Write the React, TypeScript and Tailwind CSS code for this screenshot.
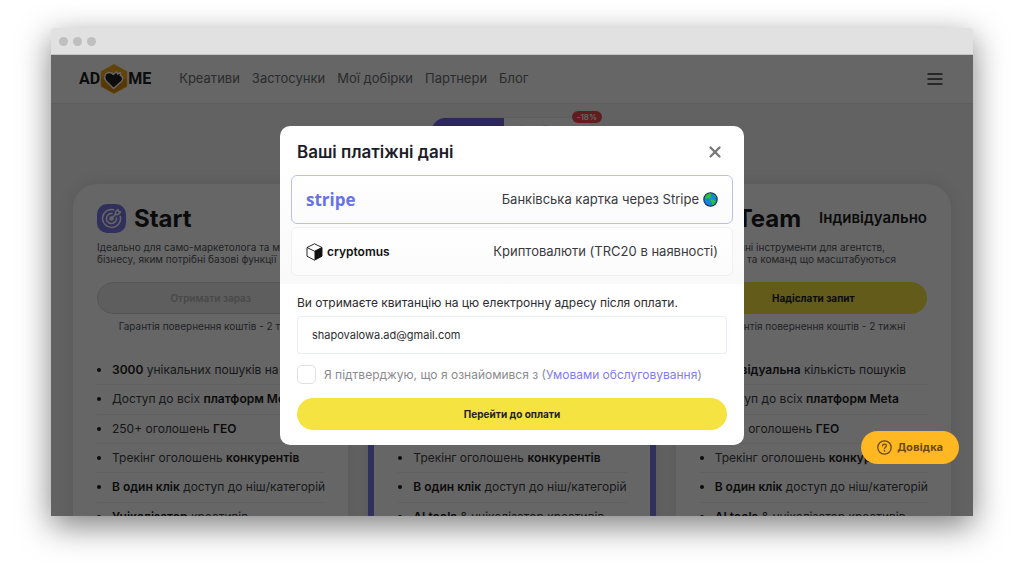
import React, { useState } from "react";
import { X } from "lucide-react";

type Feature = { bold?: string; before?: string; after?: string };

type Plan = {
  name: string;
  price?: string;
  description: string[];
  cta: string;
  disabled?: boolean;
  highlighted?: boolean;
  features: Feature[];
};

const navLinks = ["Креативи", "Застосунки", "Мої добірки", "Партнери", "Блог"];

const plans: Plan[] = [
  {
    name: "Start",
    description: ["Ідеально для само-маркетолога та малого", "бізнесу, яким потрібні базові функції"],
    cta: "Отримати зараз",
    disabled: true,
    features: [
      { bold: "3000", after: " унікальних пошуків на місяць" },
      { before: "Доступ до всіх ", bold: "платформ Meta" },
      { before: "250+ оголошень ", bold: "ГЕО" },
      { before: "Трекінг оголошень ", bold: "конкурентів" },
      { bold: "В один клік", after: " доступ до ніш/категорій" },
      { bold: "Унікалізатор", after: " креативів" },
    ],
  },
  {
    name: "Pro",
    description: ["Ідеально для досвідчених маркетологів", "та невеликих команд"],
    cta: "Отримати зараз",
    highlighted: true,
    features: [
      { bold: "9000", after: " унікальних пошуків" },
      { before: "Доступ до всіх ", bold: "платформ Meta" },
      { before: "250+ оголошень ", bold: "ГЕО" },
      { before: "Трекінг оголошень ", bold: "конкурентів" },
      { bold: "В один клік", after: " доступ до ніш/категорій" },
      { bold: "AI tools", after: " & унікалізатор креативів" },
    ],
  },
  {
    name: "Team",
    price: "Індивідуально",
    description: ["Повноцінні інструменти для агентств,", "компаній та команд що масштабуються"],
    cta: "Надіслати запит",
    features: [
      { bold: "Індивідуальна", after: " кількість пошуків" },
      { before: "Доступ до всіх ", bold: "платформ Meta" },
      { before: "250+ оголошень ", bold: "ГЕО" },
      { before: "Трекінг оголошень ", bold: "конкурентів" },
      { bold: "В один клік", after: " доступ до ніш/категорій" },
      { bold: "AI tools", after: " & унікалізатор креативів" },
    ],
  },
];

const Logo = () => (
  <a
    href="#"
    aria-label="AdHeart Me"
    className="flex items-center font-['Roboto',sans-serif] text-base leading-none font-bold text-[#222]"
  >
    AD
    <svg width="28" height="30" viewBox="0 0 28 30">
      <path d="M14 1 L26.500 8 V22 L14 29 L1.500 22 V8 Z" fill="#f5a81c" stroke="#f5a81c" strokeWidth="1.500" strokeLinejoin="round" />
      <path d="M1.500 15 H26.500 V22 L14 29 L1.500 22 Z" fill="#d98a0c" />
      <path
        d="M13.500 24.500 L5.800 16.700 C3.600 14 4.600 9.800 8 8.700 C10 8.200 12 8.900 13.300 10.500 L16.600 7.800 L17.500 10 L20.500 8.500 L20.300 11.200 C23 12.800 23.400 15.500 21.400 17.500 Z"
        fill="#222"
        stroke="#fff"
        strokeWidth="1.400"
        strokeLinejoin="round"
      />
    </svg>
    ME
  </a>
);

const TargetIcon = () => (
  <span className="flex size-[29px] items-center justify-center rounded-[10px] bg-[#7b79e8]">
    <svg width="21" height="21" viewBox="0 0 21 21" fill="none" stroke="#fff" strokeWidth="1.500" strokeLinecap="round" strokeLinejoin="round">
      <path d="M12.500 1.700 A9 9 0 1 0 19.300 8.500" />
      <path d="M11 5.600 A5 5 0 1 0 15.400 10" />
      <path d="M10.500 10.500 L14.500 6.500 M14.500 6.500 V3.800 L17 1.500 L17.500 3.500 L19.500 4 L17.200 6.500 Z" />
      <circle cx="10.500" cy="10.500" r="1.500" />
    </svg>
  </span>
);

const GlobeIcon = () => (
  <svg width="15" height="15" viewBox="0 0 15 15">
    <circle cx="7.500" cy="7.500" r="6.700" fill="#1484e0" stroke="#17324d" strokeWidth="1.100" />
    <path d="M2 5 L3.500 2.700 L6.500 1.300 L8.500 2 L7.500 3.700 L8.600 5 L6.500 6.800 L4.600 6.300 L3 7 Z" fill="#2fc331" />
    <path d="M7.600 7.600 L10.500 7.500 L12.600 9.300 L11.200 12 L9.700 13.400 L9 10.800 L7.400 9.300 Z" fill="#2fc331" />
    <path d="M11 2.500 L13 4.800 L11.500 5 Z" fill="#2fc331" />
  </svg>
);

const CubeIcon = () => (
  <svg width="17" height="18" viewBox="0 0 17 18" strokeLinejoin="round">
    <path d="M8.500 0.800 L16 4.500 V13.200 L8.500 17.200 L1 13.200 V4.500 Z" fill="#fff" stroke="#111" strokeWidth="0.900" />
    <path d="M1 4.500 L8.500 8.200 L16 4.500" fill="none" stroke="#111" strokeWidth="0.900" />
    <path d="M8.500 8.200 L16 4.500 V13.200 L8.500 17.200 Z" fill="#111" />
  </svg>
);

const PlanCard = ({ plan }: { plan: Plan }) => (
  <section
    className={
      plan.highlighted
        ? "-mx-[6px] rounded-[30px] border-x-[6px] border-[#7b79e8] bg-white px-6 pt-5 pb-12 shadow-[0_0_16px_rgba(0,0,0,0.1)]"
        : "rounded-[24px] bg-white px-6 pt-5 pb-12 shadow-[0_0_16px_rgba(0,0,0,0.1)]"
    }
  >
    <div className="flex h-[29px] items-center gap-2">
      <TargetIcon />
      <h2 className="text-2xl leading-7 font-bold text-[#1c1d21]">{plan.name}</h2>
      {plan.price && <span className="ml-auto text-[15px] font-semibold text-[#1c1d21]">{plan.price}</span>}
    </div>
    <p className="mt-2 text-[10px] leading-3 whitespace-nowrap text-[#55575d]">
      {plan.description[0]}
      <br />
      {plan.description[1]}
    </p>
    <button
      disabled={plan.disabled}
      className={
        plan.disabled
          ? "mt-[17px] h-8 w-full rounded-full border border-[#d5d5d5] bg-[#ececec] text-[10px] font-semibold text-[#b5b5b5]"
          : "mt-[17px] h-8 w-full rounded-full bg-[#f5e342] text-[10px] font-bold text-[#1c1d21]"
      }
    >
      {plan.cta}
    </button>
    <p className="mt-[6px] text-center text-[10px] leading-3 whitespace-nowrap text-[#55575d]">
      Гарантія повернення коштів - 2 тижні
    </p>
    <ul className="mt-6 grid h-44 grid-rows-6 text-xs text-[#3c3d42]">
      {plan.features.map((feature, index) => (
        <li key={index} className="flex items-center gap-[11px] border-b border-[#f0f0f0] whitespace-nowrap">
          <span className="size-1 rounded-full bg-[#1c1d21]" />
          <span>
            {feature.before}
            <b className="font-semibold text-[#1c1d21]">{feature.bold}</b>
            {feature.after}
          </span>
        </li>
      ))}
    </ul>
  </section>
);

const PaymentModal = () => {
  const [method, setMethod] = useState("stripe");
  const [email, setEmail] = useState("shapovalowa.ad@gmail.com");
  const [agreed, setAgreed] = useState(false);

  const optionBase =
    "flex h-[49px] cursor-pointer items-center justify-between rounded-md border bg-linear-to-b from-white to-[#fbfbfc] px-[14px] text-[13px] text-[#3a3a3d]";

  return (
    <div role="dialog" aria-labelledby="modal-title" className="w-full max-w-[464px] rounded-[10px] bg-white pb-[15px]">
      <div className="flex items-center justify-between pt-[14px] pr-5 pl-[17px]">
        <h1 id="modal-title" className="text-[17px] leading-6 font-semibold text-[#1c1d28]">
          Ваші платіжні дані
        </h1>
        <button aria-label="Закрити" className="text-[#77777a]">
          <X size={18} strokeWidth={3} />
        </button>
      </div>

      <div className="flex flex-col gap-[3px] bg-linear-to-b from-white to-[#f9f9fa] px-[11px] pt-[11px] pb-2">
        <label className={method === "stripe" ? `${optionBase} border-[#bdbdf5]` : `${optionBase} border-[#f0f0f2]`}>
          <input type="radio" name="method" className="sr-only" checked={method === "stripe"} onChange={() => setMethod("stripe")} />
          <span className="font-['Open_Sans',sans-serif] text-[17px] leading-6 font-bold text-[#6772e5]">stripe</span>
          <span className="flex items-center gap-1">
            Банківська картка через Stripe <GlobeIcon />
          </span>
        </label>
        <label className={method === "cryptomus" ? `${optionBase} border-[#bdbdf5]` : `${optionBase} border-[#f0f0f2]`}>
          <input type="radio" name="method" className="sr-only" checked={method === "cryptomus"} onChange={() => setMethod("cryptomus")} />
          <span className="flex items-center gap-1 text-xs font-semibold text-[#111]">
            <CubeIcon /> cryptomus
          </span>
          <span>Криптовалюти (TRC20 в наявності)</span>
        </label>
      </div>

      <form className="px-[17px] pt-[11px]" onSubmit={(e) => e.preventDefault()}>
        <label htmlFor="email" className="block text-xs leading-4 text-[#2c2c30]">
          Ви отримаєте квитанцію на цю електронну адресу після оплати.
        </label>
        <input
          id="email"
          type="email"
          value={email}
          onChange={(e) => setEmail(e.target.value)}
          className="mt-[5px] block h-[38px] w-full rounded-[3px] border border-[#e8eef6] px-[14px] text-[11px] text-[#2c2c30] outline-none"
        />
        <div className="mt-[11px] flex items-center gap-2 text-xs text-[#8b8b8e]">
          <input
            id="terms"
            type="checkbox"
            checked={agreed}
            onChange={(e) => setAgreed(e.target.checked)}
            className="size-[19px] appearance-none rounded-[5px] border border-[#dfdfe1] checked:bg-[#7b79e8]"
          />
          <label htmlFor="terms">
            Я підтверджую, що я ознайомився з (
            <a href="#terms" className="text-[#7f7cf0]">
              Умовами обслуговування
            </a>
            )
          </label>
        </div>
        <button type="submit" className="mt-[14px] block h-8 w-full rounded-full bg-[#f5e342] text-[10px] font-bold text-[#222]">
          Перейти до оплати
        </button>
      </form>
    </div>
  );
};

const App = () => {
  return (
    <div className="flex h-screen flex-col bg-white px-[51px] pt-7 pb-18 font-['Inter',sans-serif]">
      <div className="flex min-h-0 flex-1 flex-col rounded-t-[3px] shadow-[0_10px_32px_rgba(0,0,0,0.5)]">
        {/* Browser bar */}
        <div className="flex h-[27px] shrink-0 items-center gap-[5px] rounded-t-[3px] border-b border-[#c4c4c4] bg-[#e1e1e1] px-2">
          <span className="size-[9px] rounded-full bg-[#bfbfbf]" />
          <span className="size-[9px] rounded-full bg-[#bfbfbf]" />
          <span className="size-[9px] rounded-full bg-[#bfbfbf]" />
        </div>

        <div className="relative min-h-0 flex-1 overflow-hidden bg-[#f4f4f7]">
          {/* Header */}
          <header className="flex h-[49px] items-center border-b border-[#ececec] bg-white px-7">
            <Logo />
            <nav className="ml-7 flex gap-3 text-[13px] text-[#6a6c72]">
              {navLinks.map((link) => (
                <a key={link} href="#">
                  {link}
                </a>
              ))}
            </nav>
            <button aria-label="Меню" className="ml-auto pr-[2px]">
              <svg width="16" height="12" viewBox="0 0 16 12" stroke="#333" strokeWidth="1.400" strokeLinecap="round">
                <path d="M1 1 H15 M1 6 H15 M1 11 H15" />
              </svg>
            </button>
          </header>

          {/* Billing period */}
          <div className="mt-[13px] flex justify-center">
            <div className="relative flex h-7 rounded-full border border-[#ececf0] bg-white text-[11px] leading-6">
              <button className="w-[72px] rounded-l-full bg-[#6e68e0] font-semibold text-white">Щомісяця</button>
              <button className="w-[88px] pl-[9px] text-left text-[#55575d]">Річний</button>
              <span className="absolute -top-[7px] -right-[10px] rounded-full bg-[#f04a4f] px-[5px] text-[8px] leading-3 font-semibold text-white">
                -18%
              </span>
            </div>
          </div>

          {/* Plans */}
          <div className="mt-[39px] grid grid-cols-3 gap-[26px] px-[22px]">
            {plans.map((plan) => (
              <PlanCard key={plan.name} plan={plan} />
            ))}
          </div>

          <div className="absolute inset-0 flex items-center justify-center bg-black/60">
            <PaymentModal />
          </div>

          <button className="absolute right-[14px] bottom-[52px] flex h-[33px] items-center gap-[6px] rounded-full bg-[#ffb722] px-4 font-['Noto_Sans',sans-serif] text-[11px] font-bold text-[#694a0b]">
            <svg width="15" height="15" viewBox="0 0 15 15" fill="none" stroke="#694a0b" strokeWidth="1.300" strokeLinecap="round">
              <circle cx="7.500" cy="7.500" r="6.700" />
              <path d="M5.600 5.900 C5.600 3.400 9.400 3.500 9.400 5.800 C9.400 7.200 7.500 7.300 7.500 8.700" />
              <path d="M7.500 10.900 V11" strokeWidth="1.600" />
            </svg>
            Довідка
          </button>
        </div>
      </div>
    </div>
  );
};

export default App;
